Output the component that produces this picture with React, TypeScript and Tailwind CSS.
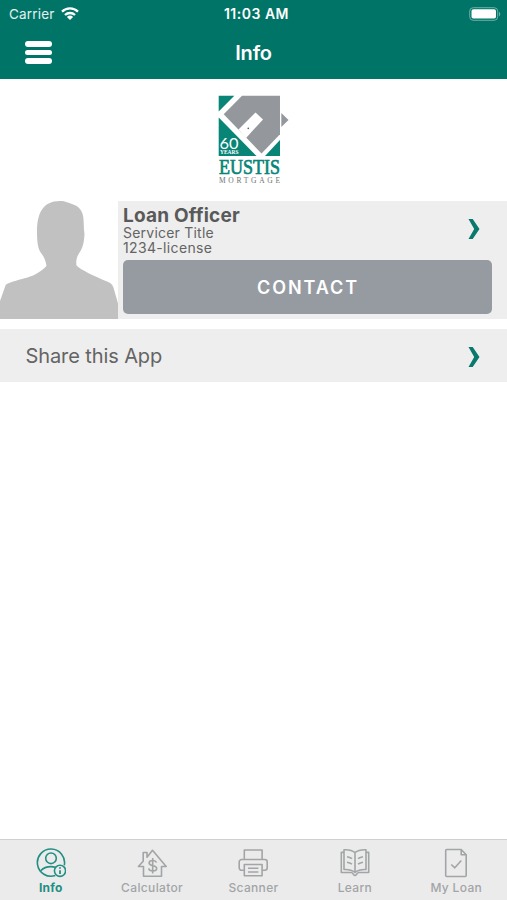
import type { ReactNode } from 'react'

const TABS: { label: string; icon: ReactNode; active?: boolean }[] = [
  {
    label: 'Info',
    active: true,
    icon: (
      <>
        <path d="M19.300 27.500A13.600 13.600 0 1 1 28.300 17.300" />
        <circle cx="15" cy="10.300" r="5.300" />
        <path d="M4.700 22.700c2.600-2.900 6-4.100 10.300-4.100 1.600 0 3 .2 4.400.6" />
        <circle cx="24" cy="22.800" r="5.600" />
        <path d="M24 22.300v3.700M24 19.300v1.400" strokeWidth="1.800" />
      </>
    ),
  },
  {
    label: 'Calculator',
    icon: (
      <>
        <path d="M6.500 28.200V18.500H1.400L6.200 13.300V4.500h3.800v4.700L15.500 2.300l13.700 16.200h-4.700v9.700z" />
        <path d="M19.400 14.500c-.5-1.400-1.800-2-3.700-2-2.200 0-3.600.9-3.600 2.600 0 3.700 7.600 1.600 7.600 5.100 0 1.800-1.500 2.700-3.900 2.700-2.300 0-3.800-.9-4.100-2.600M15.700 10v15.500" />
      </>
    ),
  },
  {
    label: 'Scanner',
    icon: (
      <>
        <path d="M6.300 11.500V2h17.800v9.500" />
        <path d="M6 22.300H3.700a2.500 2.500 0 0 1-2.500-2.500V14a2.500 2.500 0 0 1 2.500-2.500h23a2.500 2.500 0 0 1 2.500 2.500v5.800a2.500 2.500 0 0 1-2.500 2.500h-2.300" />
        <path d="M6.300 16.500h17.800v11.300H6.300zM10 20.300h10.400M10 24h10.400" />
      </>
    ),
  },
  {
    label: 'Learn',
    icon: (
      <>
        <path d="M15 4.600C12.200 2.300 8.500 1.500 4 1.800v19.700c4.500-.2 8.200.7 11 3 2.800-2.300 6.500-3.200 11-3V1.800c-4.500-.3-8.200.5-11 2.800zv19.900" />
        <path d="M4 4.400H1.300v20.100h9.900c1.700 0 2.500 3 3.800 3s2.100-3 3.800-3h9.900V4.400H26" />
        <path d="M7 8.700c2 .3 3.500.9 5 2M7 14.200c2 .3 3.500.9 5 2M23 8.700c-2 .3-3.500.9-5 2M23 14.200c-2 .3-3.500.9-5 2" />
      </>
    ),
  },
  {
    label: 'My Loan',
    icon: (
      <>
        <path d="M5.700 1.500h14.500l5 5.200v20.800a1 1 0 0 1-1 1H5.700a1 1 0 0 1-1-1v-25a1 1 0 0 1 1-1z" />
        <path d="M20.200 1.500v5.200h5M10.300 16.500l3.500 3.300 6.500-7.300" />
      </>
    ),
  },
]

function Chevron() {
  return (
    <svg viewBox="0 0 12 20" className="h-5 w-3 shrink-0 fill-[#08796c]">
      <path d="M.5 0h4.200l6.800 10-6.800 10H.5l5.700-10z" />
    </svg>
  )
}

function StatusBar() {
  return (
    <div className="grid h-[27px] grid-cols-3 items-center pl-[9px] pr-[6px] text-[13.5px] text-white">
      <div className="flex items-center gap-[6px] tracking-[0.200px] text-white/90">
        <span className="pt-px">Carrier</span>
        <svg viewBox="0 0 18 13" className="h-[13px] w-[18px]" fill="none" stroke="white" strokeWidth="2.300">
          <path d="M1 4.700a11.500 11.500 0 0 1 16 0M4 8a7.200 7.200 0 0 1 10 0" />
          <path d="M5.900 9.900a4.500 4.500 0 0 1 6.200 0L9 13z" fill="white" stroke="none" />
        </svg>
      </div>
      <span className="whitespace-nowrap pl-[3px] text-center text-[14px] font-semibold tracking-[0.500px]">11:03 AM</span>
      <svg viewBox="0 0 32 14" className="h-[14px] w-8 justify-self-end">
        <rect x=".7" y=".7" width="28" height="12.600" rx="3.500" fill="none" stroke="#6fb0a8" />
        <rect x="2.500" y="2.300" width="24.500" height="9.200" rx="1.800" fill="white" />
        <path d="M30 4.700c1.700.8 1.700 3.800 0 4.600z" fill="#6fb0a8" />
      </svg>
    </div>
  )
}

function Logo() {
  return (
    <svg viewBox="0 0 72 92" className="h-[92px] w-[72px] overflow-visible">
      <g fill="#088577">
        <path d="M.7.700h15.600L.7 16.500zM.7 22.500 38.500 61H.7zM62 45v16H47z" />
      </g>
      <g fill="#94979c">
        <path d="M5.700 19.300 24 .7h38v38.600L43.500 58.500z" />
        <path d="M63.300 18 70.500 25l-7.200 7z" />
      </g>
      <path d="M20.500 34.500 37.500 17.500l7.500 7-17 18.500z" fill="white" />
      <circle cx="30.300" cy="33.300" r=".9" fill="#606970" />
      <text x="1.500" y="53.500" textLength="19" lengthAdjust="spacingAndGlyphs" className="fill-white font-['Lato',sans-serif] text-[15px]">60</text>
      <text x="2" y="59.300" textLength="18.500" lengthAdjust="spacingAndGlyphs" className="fill-white font-['Liberation_Serif',serif] text-[6px] font-bold">YEARS</text>
      <text x="1" y="79.200" textLength="61" lengthAdjust="spacingAndGlyphs" strokeWidth=".7" className="fill-[#088577] stroke-[#088577] font-['Liberation_Serif',serif] text-[21px]">EUSTIS</text>
      <text x="1" y="88" textLength="61" className="fill-[#6f7276] font-['Liberation_Serif',serif] text-[7.500px]">MORTGAGE</text>
    </svg>
  )
}

function Avatar() {
  return (
    <svg viewBox="0 0 118 118" className="h-[118px] w-[118px] shrink-0 bg-white">
      <path
        d="M0 118V100L5.500 84.500C6.500 81 27 77.500 34 74c5.500-2.700 11-6.500 12.500-9.500-1-5-2.500-9-5.500-12.500-3-4-4-11-4-21C37 12 43 0 60 0c6 0 8 2 12 3 7 2 11 7 11.500 15l.5 11 .5 4c-.5 7-1 12-4 17-3 4-5 9-4 14.500C81 69 94 75 107 80.500c5 2 6 4 7 8l4 14v15.500z"
        fill="#c1c1c1"
      />
    </svg>
  )
}

export default function App() {
  return (
    <div className="flex h-screen flex-col overflow-hidden bg-white font-['Inter',sans-serif] text-[#646464]">
      <header className="h-[79px] shrink-0 bg-[#007567]">
        <StatusBar />
        <div className="grid h-[51px] grid-cols-3 items-center px-[25px]">
          <button aria-label="Menu" className="flex w-[27px] flex-col gap-[3px]">
            <span className="h-[5.500px] rounded-full bg-white" />
            <span className="h-[5.500px] rounded-full bg-white" />
            <span className="h-[5.500px] rounded-full bg-white" />
          </button>
          <h1 className="text-center text-xl font-semibold tracking-[-0.200px] text-white">Info</h1>
        </div>
      </header>

      <main className="flex-1">
        <div className="flex h-[122px] justify-center pt-4">
          <Logo />
        </div>

        {/* Loan officer card */}
        <section className="flex h-[118px] bg-[#eeeeee]">
          <Avatar />
          <div className="flex flex-1 flex-col pl-[5px] pr-[15px]">
            <div className="flex h-[59px] justify-between pr-3">
              <div className="pt-1">
                <h2 className="pt-px text-[19px] font-bold leading-[20px] tracking-[0.200px] text-[#595959]">Loan Officer</h2>
                <p className="text-sm leading-[14.500px] tracking-[0.220px]">Servicer Title</p>
                <p className="text-sm leading-[14.500px] tracking-[0.350px]">1234-license</p>
              </div>
              <div className="pt-[18px]">
                <Chevron />
              </div>
            </div>
            <button className="h-[54px] rounded-[5px] bg-[#969ba1] pt-px pl-px text-lg font-semibold tracking-[1.900px] text-white">
              CONTACT
            </button>
          </div>
        </section>

        <button className="mt-[10px] flex h-[53px] w-full items-center justify-between bg-[#eeeeee] pl-[25.500px] pr-[27px] text-xl tracking-[-0.100px]">
          <span>Share this App</span>
          <span className="pt-[2px]">
            <Chevron />
          </span>
        </button>
      </main>

      <nav className="grid h-[61px] shrink-0 grid-cols-5 border-t border-[#d0d0d0] bg-[#ebebeb]">
        {TABS.map(({ label, icon, active }) => (
          <button
            key={label}
            className={`flex flex-col items-center pt-2 text-xs leading-4 ${
              active ? 'font-bold tracking-[0.200px] text-[#218f83]' : 'font-medium tracking-[0.350px] text-[#a2a5a7]'
            }`}
          >
            <svg viewBox="0 0 30 30" className="h-[30px] w-[30px]" fill="none" stroke="currentColor" strokeWidth="1.600" strokeLinejoin="round">
              {icon}
            </svg>
            <span className="mt-[2px]">{label}</span>
          </button>
        ))}
      </nav>
    </div>
  )
}
